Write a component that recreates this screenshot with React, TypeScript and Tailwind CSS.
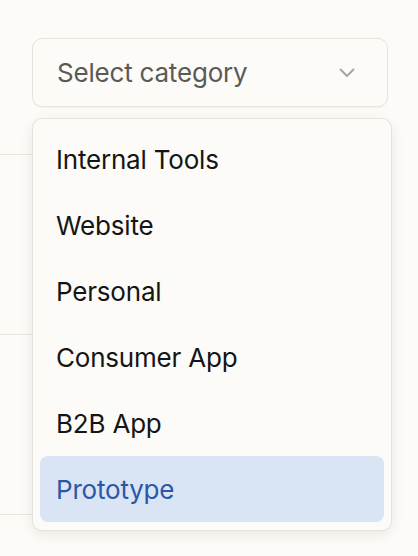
import React from "react";

const items = ["Internal Tools", "Website", "Personal", "Consumer App", "B2B App", "Prototype"];

export default function App() {
  return (
    <div
      className="relative w-[418px] h-[556px] overflow-hidden bg-[#fcfbf8]"
      style={{ fontFamily: "Inter, 'Noto Sans', sans-serif" }}
    >
      <div className="absolute left-0 w-[200px] top-[154px] h-px bg-[#e8e6e1]" />
      <div className="absolute left-0 w-[200px] top-[334px] h-px bg-[#e8e6e1]" />
      <div className="absolute left-0 w-[200px] top-[514px] h-px bg-[#e8e6e1]" />

      <div className="relative pt-[38px] pl-[32px]">
        <div className="w-[356px] h-[69px] rounded-[10px] border border-[#e6e4df] bg-[#fcfbf8] shadow-[0_1px_2px_rgba(0,0,0,0.04)] flex items-center pl-[24px] pr-[32px] justify-between">
          <span className="text-[26px] text-[#5b5a56] tracking-[-0.2px]">Select category</span>
          <svg width="16" height="10" viewBox="0 0 16 10" fill="none">
            <path d="M1.5 1.5 L8 8 L14.5 1.5" stroke="#a3a29f" strokeWidth="1.8" strokeLinecap="round" strokeLinejoin="round" />
          </svg>
        </div>

        <div className="mt-[11px] w-[360px] rounded-[10px] border border-[#e6e4df] bg-[#fcfbf8] p-[7px] pb-[8px] shadow-[0_4px_14px_rgba(0,0,0,0.08)]">
          {items.map((it) => {
            const sel = it === "Prototype";
            return (
              <div
                key={it}
                className={
                  sel
                    ? "h-[66px] flex items-center pl-[16px] rounded-[8px] bg-[#d9e4f5] text-[26px] text-[#2c56a8] tracking-[-0.2px]"
                    : "h-[66px] flex items-center pl-[16px] rounded-[8px] text-[26px] text-[#151515] tracking-[-0.2px]"
                }
              >
                {it}
              </div>
            );
          })}
        </div>
      </div>
    </div>
  );
}
